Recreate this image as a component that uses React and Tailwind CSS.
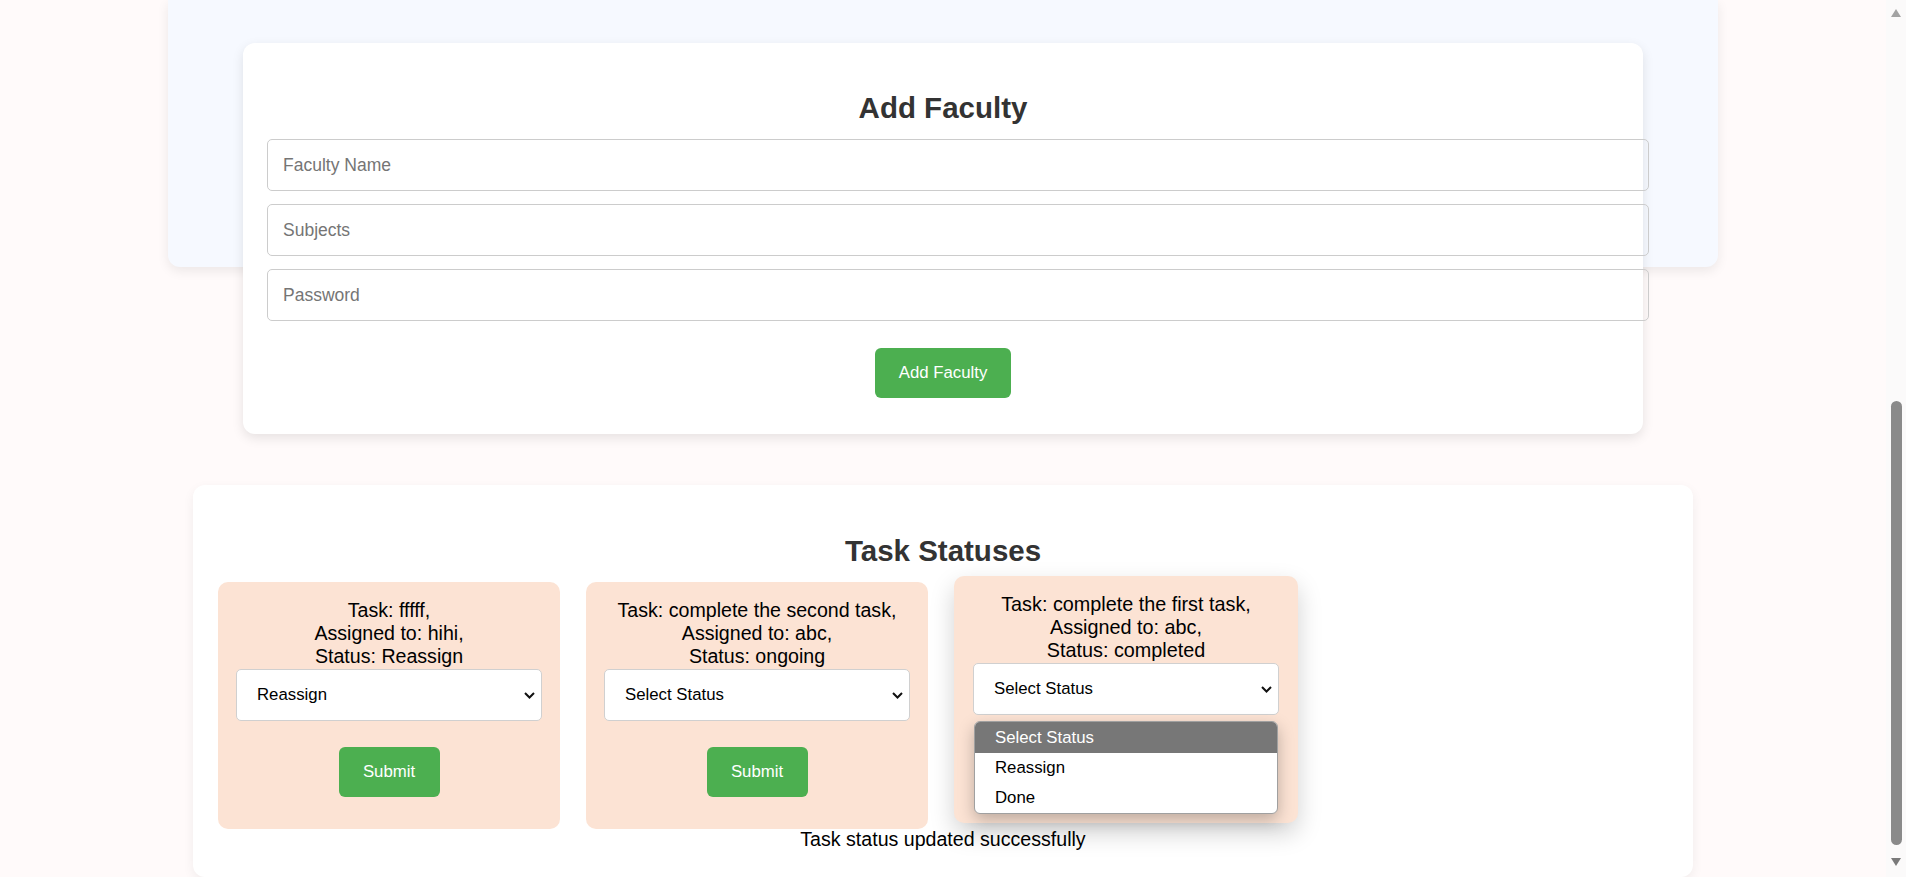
import { useState } from "react";

const tasks = [
    { id: 1, task: "fffff", assignee: "hihi", status: "Reassign", selected: "Reassign" },
    { id: 2, task: "complete the second task", assignee: "abc", status: "ongoing", selected: "" },
    { id: 3, task: "complete the first task", assignee: "abc", status: "completed", selected: "", open: true },
];

const options = [
    { value: "", label: "Select Status" },
    { value: "Reassign", label: "Reassign" },
    { value: "Done", label: "Done" },
];

const Chevron = () => (
    <svg width="11" height="7" viewBox="0 0 11 7" className="pointer-events-none">
        <path d="M1 1l4.5 4.5L10 1" fill="none" stroke="#111" strokeWidth="2" />
    </svg>
);

const TaskCard = ({ item }) => {
    const [value, setValue] = useState(item.selected);
    const label = options.find(o => o.value === value)?.label;

    return (
        <div
            className={
                item.open
                    ? "relative w-[344px] h-[247px] shrink-0 bg-[#fce3d4] rounded-[10px] px-[19px] pt-[17px] flex flex-col items-center -translate-y-[6px] shadow-[0_10px_24px_rgba(0,0,0,0.18)]"
                    : "relative w-[342px] h-[247px] shrink-0 bg-[#fce3d4] rounded-[10px] px-[18px] pt-[17px] flex flex-col items-center"
            }
        >
            <p className={item.open ? "text-[19.8px] leading-[23px] text-black text-center" : "text-[19.6px] leading-[23px] text-black text-center"}>
                Task: {item.task},<br />
                Assigned to: {item.assignee},<br />
                Status: {item.status}
            </p>
            <div className="mt-[1px] w-full h-[52px] bg-white border border-[#d0d0d0] rounded-[5px] pl-[20px] pr-[6px] flex items-center justify-between">
                <span className="text-[16.8px] text-black">{label}</span>
                <Chevron />
            </div>
            <button className="mt-[26px] w-[101px] h-[50px] bg-[#4caf50] rounded-[6px] text-white text-[16.8px]">
                Submit
            </button>

            {item.open && (
                <ul className="absolute left-[20px] top-[145px] w-[304px] bg-white border border-[#a0a0a0] rounded-[6px] overflow-hidden shadow-[0_6px_16px_rgba(0,0,0,0.25)]">
                    {options.map((o, i) => (
                        <li
                            key={o.label}
                            onClick={() => setValue(o.value)}
                            className={
                                i === 0
                                    ? "h-[31px] pl-[20px] flex items-center text-[16.8px] bg-[#777777] text-white"
                                    : "h-[30px] pl-[20px] flex items-center text-[16.8px] text-black"
                            }
                        >
                            {o.label}
                        </li>
                    ))}
                </ul>
            )}
        </div>
    );
};

const Scrollbar = () => (
    <div className="w-[20px] h-full bg-[#fbfafa] flex flex-col items-center">
        <svg width="10" height="8" viewBox="0 0 10 8" className="mt-[9px]">
            <path d="M5 0L10 8H0z" fill="#a3a3a3" />
        </svg>
        <div className="mt-[384px] w-[11px] h-[444px] rounded-full bg-[#8a8a8a]" />
        <svg width="10" height="8" viewBox="0 0 10 8" className="mt-[13px]">
            <path d="M0 0H10L5 8z" fill="#7a7a7a" />
        </svg>
    </div>
);

const App = () => {
    const [form, setForm] = useState({ name: "", subjects: "", password: "" });

    return (
        <div className="h-[877px] w-full flex overflow-hidden bg-[#fffafa] font-['Liberation_Sans',Arial,sans-serif]">
            <div className="flex-1 flex flex-col items-center">
                {/* dashboard panel, scrolled mostly out of view */}
                <div className="w-[1550px] h-[267px] shrink-0 bg-[#f6f9ff] rounded-b-[12px] shadow-[0_4px_12px_rgba(0,0,0,0.08)] flex flex-col items-center">
                    <div className="w-[1495px] h-[1px] bg-[#f6f9ff] shadow-[0_2px_6px_rgba(0,0,0,0.1)]" />

                    <div className="mt-[43px] w-[1400px] shrink-0 bg-white rounded-[12px] shadow-[0_4px_12px_rgba(0,0,0,0.1)] px-[24px] pt-[24px] pb-[36px] flex flex-col">
                        <h2 className="mt-[24px] text-[29.5px] leading-[34px] font-bold text-[#333] text-center">Add Faculty</h2>
                        <div className="mt-[14px] flex flex-col gap-[13px]">
                            <input
                                type="text"
                                placeholder="Faculty Name"
                                value={form.name}
                                onChange={e => setForm({ ...form, name: e.target.value })}
                                className="w-[1382px] h-[52px] border border-[#cccccc] rounded-[5px] px-[15px] text-[17.5px] placeholder:text-[#757575] outline-none"
                            />
                            <input
                                type="text"
                                placeholder="Subjects"
                                value={form.subjects}
                                onChange={e => setForm({ ...form, subjects: e.target.value })}
                                className="w-[1382px] h-[52px] border border-[#cccccc] rounded-[5px] px-[15px] text-[17.5px] placeholder:text-[#757575] outline-none"
                            />
                            <input
                                type="password"
                                placeholder="Password"
                                value={form.password}
                                onChange={e => setForm({ ...form, password: e.target.value })}
                                className="w-[1382px] h-[52px] border border-[#cccccc] rounded-[5px] px-[15px] text-[17.5px] placeholder:text-[#757575] outline-none"
                            />
                        </div>
                        <button className="mt-[27px] self-center w-[136px] h-[50px] bg-[#4caf50] rounded-[6px] text-white text-[16.8px]">
                            Add Faculty
                        </button>
                    </div>
                </div>

                <section className="mt-[218px] w-[1500px] shrink-0 bg-white rounded-[12px] shadow-[0_4px_12px_rgba(0,0,0,0.06)] px-[25px] pt-[49px] pb-[26px]">
                    <h2 className="text-[29.5px] leading-[34px] font-bold text-[#333] text-center">Task Statuses</h2>
                    <div className="mt-[14px] flex gap-[26px] items-start">
                        {tasks.map(t => (
                            <TaskCard key={t.id} item={t} />
                        ))}
                    </div>
                    <p className="-mt-[1px] text-[19.6px] leading-[23px] text-black text-center">Task status updated successfully</p>
                </section>
            </div>
            <Scrollbar />
        </div>
    );
};

export default App;
